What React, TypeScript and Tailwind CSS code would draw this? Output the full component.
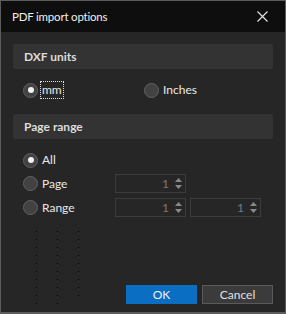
import React from "react";

const font = { fontFamily: 'Lato, "Noto Sans", sans-serif' };

function Radio({ checked, label, focus }: { checked?: boolean; label: string; focus?: boolean }) {
  return (
    <div className="flex items-center h-[18px]">
      <div className="w-[15px] h-[15px] rounded-full border border-[#626262] bg-[#424242] flex items-center justify-center shrink-0">
        {checked && <div className="w-[6px] h-[6px] rounded-full bg-[#f2f2f2]" />}
      </div>
      <span
        className={
          "ml-[2px] text-[12px] leading-[16px] text-[#e8e8e8] px-[1px] " +
          (focus ? "border border-dotted border-[#e0e0e0]" : "border border-transparent")
        }
      >
        {label}
      </span>
    </div>
  );
}

function Spinner() {
  return (
    <div className="w-[71px] h-[19px] border border-[#3c3c3c] bg-[#262626] flex items-center">
      <span className="flex-1 text-right text-[12px] leading-[16px] text-[#7a7a7a] pr-[4px]">1</span>
      <div className="w-[12px] h-full flex flex-col items-center justify-center gap-[3px] pr-[2px]">
        <svg width="7" height="4" viewBox="0 0 7 4"><path d="M0 4 L3.5 0 L7 4 Z" fill="#8a8a8a" /></svg>
        <svg width="7" height="4" viewBox="0 0 7 4"><path d="M0 0 L3.5 4 L7 0 Z" fill="#8a8a8a" /></svg>
      </div>
    </div>
  );
}

function Header({ text }: { text: string }) {
  return (
    <div className="h-[25px] rounded-[2px] bg-[#333333] flex items-center pl-[11px]">
      <span className="text-[12px] font-bold text-[#dcdcdc]">{text}</span>
    </div>
  );
}

function DotCol({ count }: { count: number }) {
  return (
    <div className="flex flex-col gap-[7px]">
      {Array.from({ length: count }).map((_, i) => (
        <div key={i} className="w-[1px] h-[1px] bg-black" />
      ))}
    </div>
  );
}

export default function App() {
  return (
    <div style={font} className="w-[286px] h-[314px] bg-[#262626] border border-b-[2px] border-[#5c5c5c] flex flex-col overflow-hidden">
      <div className="h-[31px] bg-[#0e0e0e] flex items-center justify-between pl-[11px] pr-[17px] shrink-0">
        <span className="text-[11.5px] tracking-[-0.2px] text-[#f0f0f0]">PDF import options</span>
        <svg width="11" height="11" viewBox="0 0 11 11">
          <path d="M0.5 0.5 L10.5 10.5 M10.5 0.5 L0.5 10.5" stroke="#e8e8e8" strokeWidth="1.1" />
        </svg>
      </div>
      <div className="flex-1 flex flex-col px-[12px] pt-[12px]">
        <Header text="DXF units" />
        <div className="flex items-center mt-[12px] pl-[10px]">
          <div className="w-[121px]">
            <Radio checked label="mm" focus />
          </div>
          <Radio label="Inches" />
        </div>
        <div className="mt-[15px]">
          <Header text="Page range" />
        </div>
        <div className="flex flex-col pl-[10px] mt-[12px] gap-[5px]">
          <Radio checked label="All" />
          <div className="flex items-center">
            <div className="w-[92px]">
              <Radio label="Page" />
            </div>
            <Spinner />
          </div>
          <div className="flex items-center gap-[4px]">
            <div className="w-[88px]">
              <Radio label="Range" />
            </div>
            <Spinner />
            <Spinner />
          </div>
        </div>
        <div className="flex-1 flex items-end pb-[10px]">
          <div className="flex gap-[20px] pl-[23px] self-start mt-[14px]">
            <DotCol count={10} />
            <DotCol count={10} />
            <DotCol count={9} />
          </div>
          <div className="ml-auto flex gap-[5px]">
            <div className="w-[71px] h-[19px] bg-[#0a6fc2] flex items-center justify-center text-[12px] text-[#f0f0f0]">OK</div>
            <div className="w-[71px] h-[19px] bg-[#3b3b3b] border border-[#5a5a5a] flex items-center justify-center text-[12px] text-[#e0e0e0]">Cancel</div>
          </div>
        </div>
      </div>
    </div>
  );
}
